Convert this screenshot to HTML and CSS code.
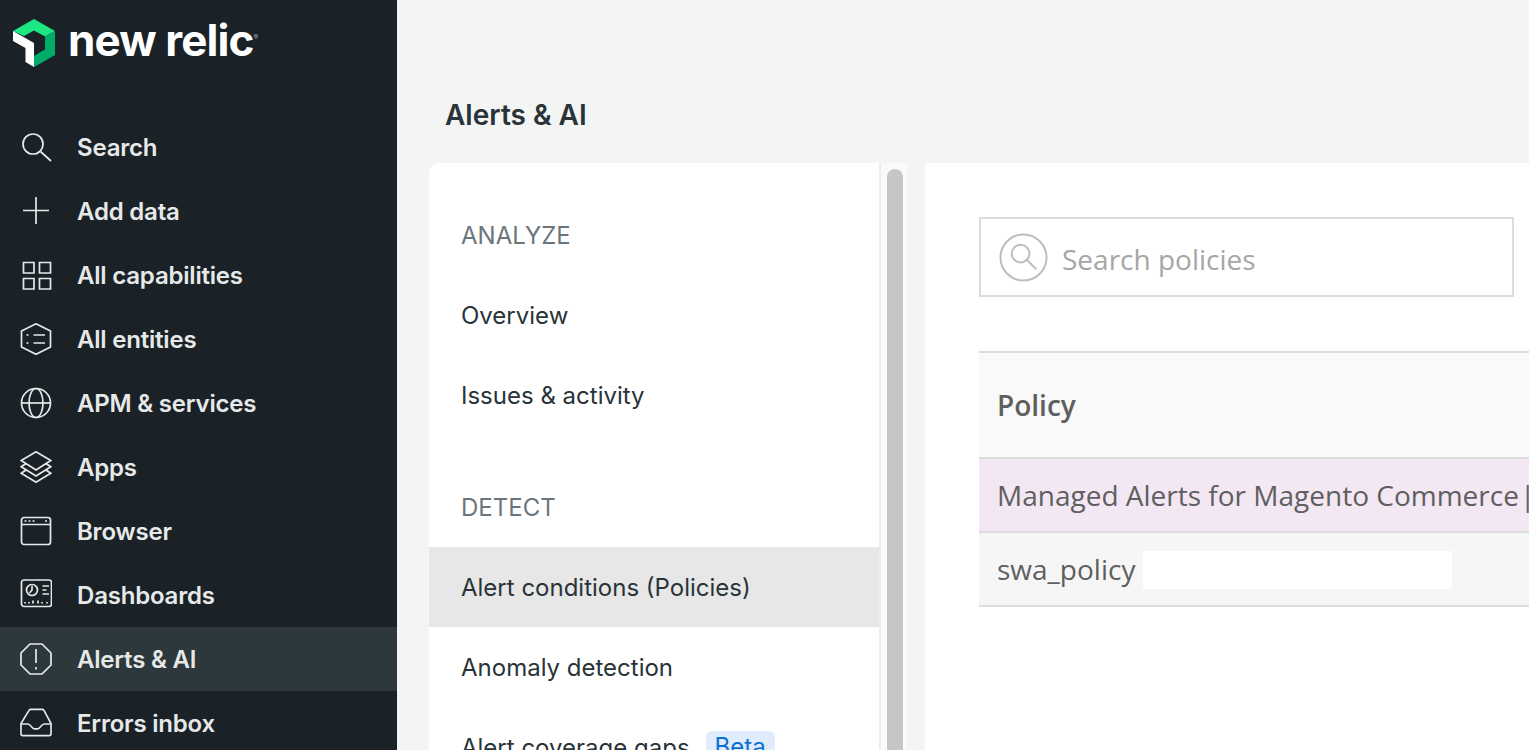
FILE: index.html
```html
<!DOCTYPE html>
<html lang="en">
<head>
    <meta charset="UTF-8">
    <meta name="viewport" content="width=device-width, initial-scale=1.0">
    <title>Alerts &amp; AI</title>
    <link rel="stylesheet" href="styles.css">
</head>
<body>
    <div class="app">
        <aside class="sidebar">
            <div class="brand">
                <svg class="brand-mark" width="42" height="50" viewBox="0 0 42 50">
                    <path fill="#1ce783" d="M0 13 21 1l21 12-10 5.500L21 12.500 11 18z"/>
                    <path fill="#00ac69" d="M42 13v24L21 49V38l11-6.500V18.500z"/>
                    <path fill="#fff" d="M0 13l21 12v24l-8.500-5V30L0 23z"/>
                </svg>
                <span class="brand-name">new relic<sup class="brand-reg">®</sup></span>
            </div>
            <nav class="nav">
                <a class="nav-item">
                    <svg class="nav-icon" viewBox="0 0 32 32"><circle cx="13" cy="13" r="10"/><path d="M20.500 20.500 31 30"/></svg>
                    Search
                </a>
                <a class="nav-item">
                    <svg class="nav-icon" viewBox="0 0 32 32"><path d="M3 15.500h26M16 2v27"/></svg>
                    Add data
                </a>
                <a class="nav-item">
                    <svg class="nav-icon" viewBox="0 0 32 32"><path d="M3.500 3.500h10.500v10.500H3.500zM19.500 3.500h11v10.500h-11zM3.500 19.500h10.500v10.500H3.500zM19.500 19.500h11v10.500h-11z"/></svg>
                    All capabilities
                </a>
                <a class="nav-item">
                    <svg class="nav-icon" viewBox="0 0 32 32"><path d="M16 .8 30.500 8v16L16 31.300 1.500 24V8z"/><path d="M13.500 12H25M13.500 20H25M6.500 12h2M6.500 20h2"/></svg>
                    All entities
                </a>
                <a class="nav-item">
                    <svg class="nav-icon" viewBox="0 0 32 32"><circle cx="16" cy="16" r="14.500"/><ellipse cx="16" cy="16" rx="7" ry="14.500"/><path d="M1.500 16h29"/></svg>
                    APM &amp; services
                </a>
                <a class="nav-item">
                    <svg class="nav-icon" viewBox="0 0 32 32"><path d="M16 .8 30.800 9.500 16 19 1.200 9.500z"/><path d="M6 12.500 1.200 15.800 16 25l14.800-9.200-4.800-3.300M6 19 1.200 22.200 16 31.200l14.800-9-4.800-3.200"/></svg>
                    Apps
                </a>
                <a class="nav-item">
                    <svg class="nav-icon" viewBox="0 0 32 32"><rect x="1.500" y="2.500" width="29" height="27" rx="2.500"/><path d="M1.500 9.500h29M4.500 6h2M8.500 6h2M12.500 6h2M25 6h2"/></svg>
                    Browser
                </a>
                <a class="nav-item">
                    <svg class="nav-icon" viewBox="0 0 32 32"><rect x="1.500" y="1" width="30" height="26.500" rx="2.500"/><circle cx="12" cy="11" r="5.500"/><path d="M12 7v4l-2.500 3M22.500 7H29M22.500 11h4M22.500 15H29M5 24.500v-1.500M9 24.500v-1.500M13 24.500V21.500M18 24.500V21.500M22 24.500v-1.500M27 24.500v-1.500"/></svg>
                    Dashboards
                </a>
                <a class="nav-item nav-item-active">
                    <svg class="nav-icon" viewBox="0 0 32 32"><path d="M10 1h12l9 9v12l-9 9H10l-9-9V10z"/><path d="M16 6v14M16 24v2.500"/></svg>
                    Alerts &amp; AI
                </a>
                <a class="nav-item">
                    <svg class="nav-icon" viewBox="0 0 33 32"><path d="M11 2h12a2 2 0 0 1 1.700 1L32 16.500V27a2 2 0 0 1-2 2H3a2 2 0 0 1-2-2V16.500L9.300 3A2 2 0 0 1 11 2z"/><path d="M1 17h7c1.500 0 2.500 1 3.500 2.500s2 2.500 3.500 2.500h3c1.500 0 2.500-1 3.500-2.500S23.500 17 25 17h7"/></svg>
                    Errors inbox
                </a>
            </nav>
        </aside>

        <main class="main">
            <h1 class="page-title">Alerts &amp; AI</h1>
            <div class="panels">
                <section class="side-panel">
                    <div class="menu">
                        <div class="menu-heading">ANALYZE</div>
                        <a class="menu-item">Overview</a>
                        <a class="menu-item">Issues &amp; activity</a>
                        <div class="menu-heading menu-heading-spaced">DETECT</div>
                        <a class="menu-item menu-item-active">Alert conditions (Policies)</a>
                        <a class="menu-item">Anomaly detection</a>
                        <a class="menu-item">Alert coverage gaps <span class="badge">Beta</span></a>
                    </div>
                    <div class="scroll-track"><div class="scroll-thumb"></div></div>
                </section>

                <section class="content">
                    <div class="search-box">
                        <svg class="search-icon" viewBox="0 0 50 50">
                            <circle cx="25" cy="25" r="23.500"/>
                            <circle cx="22" cy="21" r="9"/>
                            <path d="M28.500 27.500 38 37"/>
                        </svg>
                        <span class="search-placeholder">Search policies</span>
                    </div>
                    <div class="table">
                        <div class="table-head">Policy</div>
                        <div class="table-row table-row-highlight">Managed Alerts for Magento Commerce<span class="row-sep">|</span></div>
                        <div class="table-row">swa_policy <span class="redacted"></span></div>
                    </div>
                </section>
            </div>
        </main>
    </div>
</body>
</html>
```

FILE: styles.css
```css
html, body {
    margin: 0;
    padding: 0;
    height: 100%;
    overflow: hidden;
}
body {
    font-family: Inter, "Liberation Sans", sans-serif;
    background-color: #f3f4f4;
    color: #293338;
}
.app {
    display: flex;
    height: 750px;
    overflow: hidden;
}

/* left nav */
.sidebar {
    width: 397px;
    flex-shrink: 0;
    background-color: #1a2228;
    color: #e7e9e9;
}
.brand {
    height: 115px;
    box-sizing: border-box;
    padding: 18px 0 0 13px;
    display: flex;
    align-items: flex-start;
    gap: 13px;
}
.brand-name {
    font-size: 44px;
    font-weight: 700;
    line-height: 44px;
    color: #fff;
    letter-spacing: -0.900px;
    white-space: nowrap;
}
.brand-reg {
    font-size: 7px;
    line-height: 0;
    font-weight: 400;
    color: #9ea5a9;
    letter-spacing: 0;
}
.brand-mark {
    flex-shrink: 0;
}
.nav-item {
    height: 64px;
    display: flex;
    align-items: center;
    gap: 25px;
    padding-left: 20px;
    font-size: 24px;
    font-weight: 600;
    letter-spacing: -0.200px;
}
.nav-item-active {
    background-color: #2d383d;
}
.nav-icon {
    width: 32px;
    height: 32px;
    flex-shrink: 0;
    fill: none;
    stroke: #e7e9e9;
    stroke-width: 1.700;
}

/* main area */
.main {
    flex: 1;
    min-width: 0;
}
.page-title {
    margin: 0;
    height: 163px;
    box-sizing: border-box;
    padding: 98px 0 0 48px;
    font-size: 28px;
    line-height: 34px;
    font-weight: 600;
    color: #293338;
}
.panels {
    display: flex;
    margin-left: 32px;
    height: 587px;
}
.side-panel {
    width: 478px;
    flex-shrink: 0;
    display: flex;
    border-top-left-radius: 10px;
    overflow: hidden;
    background-color: #fff;
}
.menu {
    width: 450px;
    flex-shrink: 0;
    padding-top: 32px;
    font-size: 24px;
}
.menu-heading {
    height: 80px;
    padding-left: 32px;
    line-height: 82px;
    color: #6b757c;
}
.menu-heading-spaced {
    margin-top: 32px;
}
.menu-item {
    height: 80px;
    display: flex;
    align-items: center;
    gap: 16px;
    padding-left: 32px;
    color: #293338;
    white-space: nowrap;
}
.menu-item-active {
    background-color: #e7e7e7;
}
.badge {
    padding: 0 9px;
    border-radius: 6px;
    background-color: #e0ebfb;
    color: #0c6fd4;
    line-height: 32px;
}
.scroll-track {
    width: 25px;
    border-left: 2px solid #ececec;
    border-right: 1px solid #ececec;
    background-color: #fafafa;
    padding: 6px 4px 0 6px;
    box-sizing: content-box;
}
.scroll-thumb {
    width: 16px;
    height: 700px;
    border-radius: 8px;
    background-color: #c6c6c6;
}
.content {
    margin-left: 18px;
    flex: 1;
    min-width: 0;
    background-color: #fff;
    padding: 54px 0 0 54px;
    font-family: "Open Sans", "Liberation Sans", sans-serif;
    overflow: hidden;
    color: #5f5f5f;
}
.search-box {
    width: 535px;
    height: 80px;
    box-sizing: border-box;
    border: 2px solid #dcdcdc;
    display: flex;
    align-items: center;
    gap: 14px;
    padding-left: 18px;
}
.search-icon {
    width: 49px;
    height: 49px;
    fill: none;
    stroke: #bdbdbd;
    stroke-width: 2;
}
.search-placeholder {
    font-size: 28px;
    color: #a6a6a6;
    padding-top: 3px;
}
.table {
    margin-top: 54px;
    font-size: 28px;
}
.table-head {
    height: 104px;
    border-top: 2px solid #dcdcdc;
    border-bottom: 2px solid #dcdcdc;
    background-color: #f9f9f9;
    padding-left: 18px;
    display: flex;
    align-items: center;
    font-weight: 600;
}
.table-row {
    height: 72px;
    border-bottom: 2px solid #dcdcdc;
    background-color: #f6f6f6;
    padding-left: 18px;
    display: flex;
    align-items: center;
    gap: 8px;
    white-space: nowrap;
}
.table-row-highlight {
    background-color: #f2e7f3;
    gap: 0;
}
.row-sep {
    margin-left: 1px;
}
.redacted {
    width: 309px;
    height: 38px;
    margin-top: 2px;
    background-color: #fff;
}
```
